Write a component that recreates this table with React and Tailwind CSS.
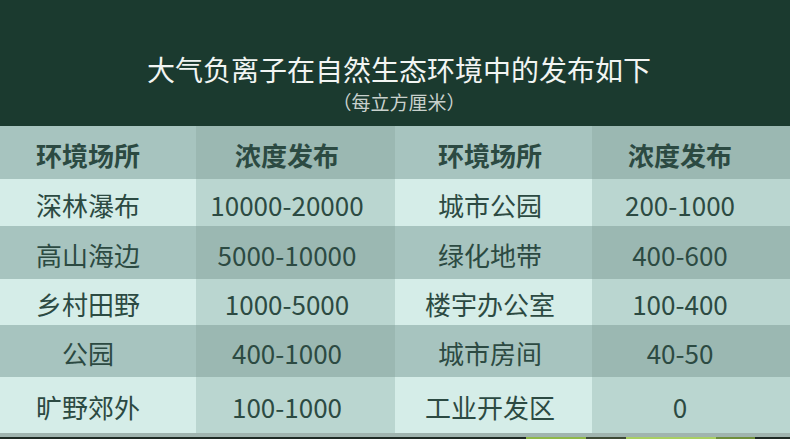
const rows = [
  ["深林瀑布", "10000-20000", "城市公园", "200-1000"],
  ["高山海边", "5000-10000", "绿化地带", "400-600"],
  ["乡村田野", "1000-5000", "楼宇办公室", "100-400"],
  ["公园", "400-1000", "城市房间", "40-50"],
  ["旷野郊外", "100-1000", "工业开发区", "0"],
];

const heights = ["h-[47px]", "h-[53px]", "h-[46px]", "h-[52px]", "h-[56px]"];
const pads = ["pr-5", "pr-[17px]", "pr-[7px]", "pr-[22px]"];

function Cell({ children, idx, shade, bold }) {
  const bg = shade
    ? idx % 2 === 0 ? "bg-[#a7c4bf]" : "bg-[#9bb8b2]"
    : idx % 2 === 0 ? "bg-[#d5ede8]" : "bg-[#bad6d0]";
  return (
    <div className={`flex items-center justify-center pt-1 ${pads[idx]} ${bg}`}>
      <span className={`text-[26px] leading-none text-[#2c4a42] ${bold ? "font-bold" : "font-normal"}`}>{children}</span>
    </div>
  );
}

export default function App() {
  return (
    <div className="w-[790px] h-[439px] overflow-hidden bg-[#1b3a2f]" style={{ fontFamily: '"Noto Sans CJK SC", "Noto Sans", sans-serif' }}>
      {/* title block */}
      <div className="h-[126px] flex flex-col items-center pt-[55px] pl-2">
        <h1 className="text-[28px] leading-none font-normal text-[#f2f5f3]">大气负离子在自然生态环境中的发布如下</h1>
        <p className="mt-[9px] text-[19px] leading-none text-[#c9d1cd]">（每立方厘米）</p>
      </div>

      <div className="grid grid-cols-[196px_199px_197px_198px]">
        <div className="contents">
          {["环境场所", "浓度发布", "环境场所", "浓度发布"].map((h, i) => (
            <div key={i} className="h-[53px] grid">
              <Cell idx={i} shade bold>{h}</Cell>
            </div>
          ))}
        </div>
        {rows.map((r, ri) =>
          r.map((c, ci) => (
            <div key={`${ri}-${ci}`} className={`${heights[ri]} grid`}>
              <Cell idx={ci} shade={ri % 2 === 1}>{c}</Cell>
            </div>
          ))
        )}
      </div>

      {/* bottom edge of the photo below */}
      <div className="h-1 bg-[#a0b4af]" />
      <div className="h-[2px] flex">
        <div className="w-[526px] bg-[#1e2a24]" />
        <div className="w-[60px] bg-[#8fb84a]" />
        <div className="w-[40px] bg-[#3d4a35]" />
        <div className="w-[90px] bg-[#a9cf63]" />
        <div className="w-[39px] bg-[#6f8f3c]" />
        <div className="flex-1 bg-[#1e2a24]" />
      </div>
    </div>
  );
}
